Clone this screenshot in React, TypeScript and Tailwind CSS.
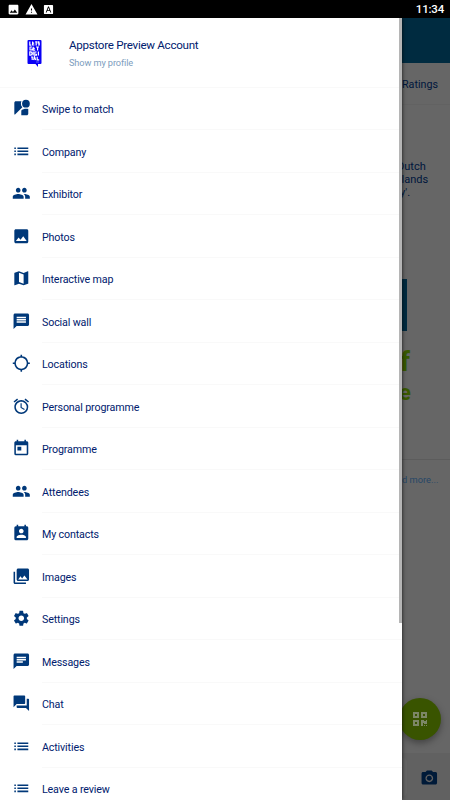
import type { IconType } from "react-icons";
import { FaQrcode } from "react-icons/fa";
import {
  MdAlarm,
  MdChat,
  MdFontDownload,
  MdGpsNotFixed,
  MdList,
  MdMap,
  MdMessage,
  MdPeople,
  MdPermContactCalendar,
  MdPhoto,
  MdPhotoCamera,
  MdPhotoLibrary,
  MdQuestionAnswer,
  MdSettings,
  MdStreetview,
  MdToday,
  MdWarning,
} from "react-icons/md";

type MenuItem = { label: string; icon: IconType };

const menuItems: MenuItem[] = [
  { label: "Swipe to match", icon: MdStreetview },
  { label: "Company", icon: MdList },
  { label: "Exhibitor", icon: MdPeople },
  { label: "Photos", icon: MdPhoto },
  { label: "Interactive map", icon: MdMap },
  { label: "Social wall", icon: MdMessage },
  { label: "Locations", icon: MdGpsNotFixed },
  { label: "Personal programme", icon: MdAlarm },
  { label: "Programme", icon: MdToday },
  { label: "Attendees", icon: MdPeople },
  { label: "My contacts", icon: MdPermContactCalendar },
  { label: "Images", icon: MdPhotoLibrary },
  { label: "Settings", icon: MdSettings },
  { label: "Messages", icon: MdChat },
  { label: "Chat", icon: MdQuestionAnswer },
  { label: "Activities", icon: MdList },
  { label: "Leave a review", icon: MdList },
];

const StatusBar = () => {
  return (
    <header className="flex h-[18px] shrink-0 items-center justify-between bg-black pr-[6px] pl-[7px] text-white">
      <div className="flex items-center gap-[5px]">
        <MdPhoto size={13} />
        <MdWarning size={13} />
        <MdFontDownload size={11} />
      </div>
      <span className="text-[11.5px] leading-[18px] font-medium tracking-[-0.2px]">
        11:34
      </span>
    </header>
  );
};

const Avatar = () => {
  return (
    <svg width="15" height="30" viewBox="0 0 15 30">
      <path
        d="M1.5 1h12q1 0 1 1v22q0 1-1 1h-2.5v3l-2.5-3h-7q-1 0-1-1V2q0-1 1-1z"
        fill="#0a00f5"
      />
      <path
        d="M2.8 2.6v3.6h1.6M5.6 2.6v3.4h1.8M5.6 4.2h1.6M8.2 2.8h2M9.2 3v3.4M12.4 2.8h-1.2v1.4h1v1.8h-1.2M5 8H3v3h2V9.6M6.2 7.8v3.4h2M6.2 9.4h1.6M9 8h3M10.6 8v3.6M2.8 12.8v3.4h1q1.2 0 1.2-1.7t-1.2-1.7zM6.2 12.6v3.8M9.6 13H7.8v3.2h1.6v-1.4M11.4 12.6v3.8M4 18h2.4M5.2 18v3M6.6 21l1-3.2 1 3.2M10.2 17.8v3h2"
        stroke="#fff"
        strokeWidth="1.2"
        fill="none"
      />
      <path d="M9 23h3" stroke="#8a86ff" strokeWidth=".7" />
    </svg>
  );
};

const Drawer = () => {
  return (
    <nav className="relative z-10 h-full w-[402px] shrink-0 overflow-hidden bg-white text-[#00206e] shadow-[0_0_4px_rgba(0,0,0,0.8)]">
      <div className="flex h-[69.5px] items-center border-b border-[#f9f9f9] pl-[27px]">
        <div className="pt-[3px]">
          <Avatar />
        </div>
        <div className="ml-[27px] pt-[4px]">
          <div className="text-[11.6px] leading-[17px] tracking-[-0.28px]">
            Appstore Preview Account
          </div>
          <div className="text-[9.2px] leading-[17px] tracking-[-0.1px] text-[#7d9dbe]">
            Show my profile
          </div>
        </div>
      </div>
      <ul>
        {menuItems.map(({ label, icon: Icon }) => (
          <li key={label} className="flex h-[42.5px] items-center pl-[11.7px]">
            <Icon size={18.6} className="mr-[11.7px] shrink-0 text-[#003879]" />
            <span className="flex h-full flex-1 items-center border-b border-[#f9f9f9] pt-[4px] text-[10.7px] tracking-[-0.14px]">
              {label}
            </span>
          </li>
        ))}
      </ul>
      <div className="absolute top-0 right-0 h-[605px] w-[3px] bg-[#b5b5b5]" />
    </nav>
  );
};

// What stays visible of the event page, dimmed, right of the drawer
const EventPage = () => {
  return (
    <main className="relative flex flex-1 flex-col bg-[#666] text-[#00163d]">
      <div className="h-[45px] bg-[#002b40]" />
      <div className="flex h-[42px] items-center border-b border-[#626262] pt-[3px] text-[10.7px]">
        Ratings
      </div>
      <div className="flex h-[156px] flex-col items-start pt-[55px] text-[11px] leading-[13px]">
        <span className="-ml-[5px]">Dutch</span>
        <span className="-ml-[0.5px]">lands</span>
        <span className="-ml-[2px]">y'.</span>
      </div>
      <div className="mt-[18px] h-[52px] w-[5px] bg-[#002b40]" />
      <div className="flex h-[129px] flex-col border-b border-[#5c5c5c] pt-[15px] font-bold text-[#395a00]">
        <span className="-ml-[2px] text-[28px] leading-[32px]">f</span>
        <span className="-ml-[3px] text-[22px] leading-[30px]">e</span>
      </div>
      <div className="flex h-[37px] items-center pt-[2px] text-[9.3px] text-[#274766]">
        d more...
      </div>
      <div className="flex-1" />
      <div className="flex h-[47px] items-center bg-[#616161]">
        <div className="h-[38px] w-[5px] rounded-r-[4px] bg-[#656565]" />
        <MdPhotoCamera size={18.6} className="mt-[3px] ml-[12.5px] text-[#001a38]" />
      </div>
      <div className="absolute top-[680px] -left-[3px] flex size-[42px] items-center justify-center rounded-full bg-[#395400] shadow-[0_3px_7px_rgba(0,0,0,0.35)]">
        <FaQrcode size={16} className="text-[#7c8766]" />
      </div>
    </main>
  );
};

const App = () => {
  return (
    <div className="flex h-[800px] w-[450px] flex-col overflow-hidden font-[Roboto,sans-serif]">
      <StatusBar />
      <div className="flex min-h-0 flex-1">
        <Drawer />
        <EventPage />
      </div>
    </div>
  );
};

export default App;
